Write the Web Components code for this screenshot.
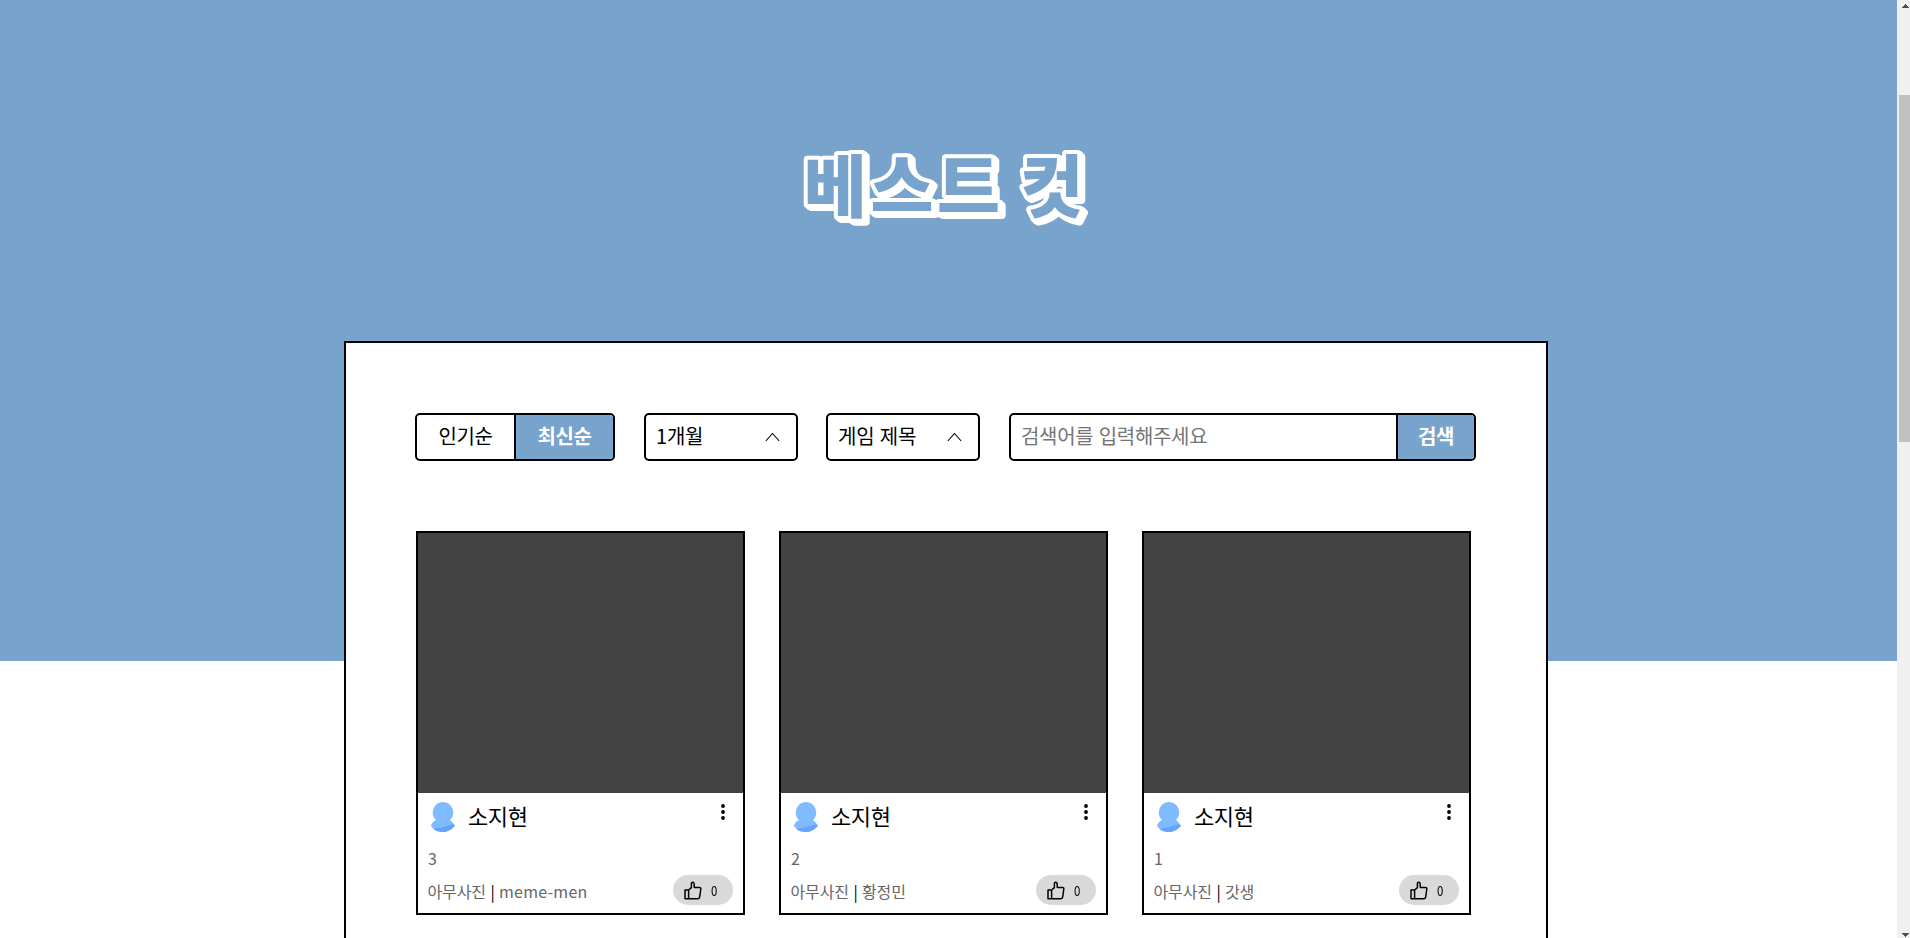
<!DOCTYPE html>
<html lang="ko">
<head>
<meta charset="utf-8">
<title>베스트 컷</title>
<style>
html,body{margin:0;height:100%;overflow:hidden;background:#fff}
body{font-family:"Noto Sans CJK KR",sans-serif;color:#000}
</style>
</head>
<body>
<best-page></best-page>
<script>
const define = (name, html, init) => customElements.define(name, class extends HTMLElement {
  constructor() {
    super();
    const t = document.createElement('template');
    t.innerHTML = html;
    this.attachShadow({mode: 'open'}).append(t.content.cloneNode(true));
  }
  connectedCallback() { if (init) init(this, this.shadowRoot); }
});

define('hero-title', `<style>
:host{display:flex;height:341px;box-sizing:border-box;padding:130px 0 0 790px}
svg{display:block;filter:drop-shadow(2px 1px 0 #fff) drop-shadow(2px 2px 0 #fff)}
text{font-size:68.5px;font-weight:900;letter-spacing:3.6px;word-spacing:-6px;fill:#77a3cd;stroke:#fff;stroke-width:8px;stroke-linejoin:round;paint-order:stroke fill}
</style><svg width="320" height="120"><text x="13.800" y="82.400"></text></svg>`,
(host, root) => { root.querySelector('text').textContent = host.getAttribute('label'); });

define('sort-toggle', `<style>
:host{display:flex;box-sizing:border-box;width:200px;height:48px;border:2px solid #000;border-radius:5px;overflow:hidden;
font-size:20px;line-height:42px;letter-spacing:-.4px}
div{flex:1;text-align:center}
.on{border-left:2px solid #000;background:#77a3cd;color:#fff;font-weight:700}
</style><div><slot name="popular"></slot></div><div class="on"><slot name="latest"></slot></div>`);

define('drop-select', `<style>
:host{display:flex;align-items:center;justify-content:space-between;box-sizing:border-box;width:154px;height:48px;
border:2px solid #000;border-radius:5px;padding:0 16px 0 10px;font-size:20px;letter-spacing:-.2px}
span{line-height:42px;height:44px}
svg{display:block}
</style><span><slot></slot></span><svg width="15" height="10" viewBox="0 0 15 10"><path d="M.8 9 7.5 1.5 14.2 9" fill="none" stroke="#000" stroke-width="1.1"/></svg>`);

define('search-box', `<style>
:host{display:flex;box-sizing:border-box;width:467px;height:48px;border:2px solid #000;border-radius:5px;overflow:hidden;
font-size:20px;line-height:42px;letter-spacing:-.3px}
.q{flex:1;padding-left:10px;color:#757575}
.b{width:76px;border-left:2px solid #000;background:#77a3cd;color:#fff;font-weight:700;text-align:center}
</style><div class="q"><slot></slot></div><div class="b"><slot name="action"></slot></div>`);

define('like-pill', `<style>
:host{display:flex;align-items:center;box-sizing:border-box;width:60px;height:30px;border-radius:15px;background:#d9d9d9;
padding:0 0 0 11px;gap:9px;font-size:13px}
span{display:block;transform:scaleX(.88);transform-origin:0 50%}
</style><svg width="18" height="19" viewBox="0 0 18 19" fill="none" stroke="#000" stroke-width="1.5" stroke-linejoin="round" stroke-linecap="round"><path d="M4.600 9 7.400 6.600V2.400C7.400 1 9.800.7 10.100 2.500L10.300 6.400H15.300Q17 6.500 16.800 8L15.700 15.800Q15.300 17.800 13.600 17.800H4.600ZM4.600 9H1V17.800H4.600"/></svg><span><slot></slot></span>`);

define('user-avatar', `<style>:host{display:block;width:26px;height:30px}svg{display:block}</style>
<svg width="26" height="30" viewBox="0 0 26 30"><path d="M13 0a10.500 10.500 0 0 1 7 18c2 1.500 4 3.500 4.800 6C21 28 17 30 13 30S4 28 .8 24C1.700 21 3.600 19 6 18A10.500 10.500 0 0 1 13 0Z" fill="#80bbff"/><path d="M3 26.700C11 26 18 24 23.500 22L24.800 24C21 28.300 17 30 13 30 9 30 5.500 29 3 26.700Z" fill="#66a3ff"/></svg>`);

define('cut-card', `<style>
:host{display:flex;flex-direction:column;box-sizing:border-box;width:329px;height:384px;border:2px solid #000;background:#fff}
.img{height:260px;background:#434343}
.user{display:flex;height:50px;padding:9px 17px 0 12px;box-sizing:border-box}
.name{margin-left:12px;font-size:22px;line-height:26px;letter-spacing:-.4px;flex:1}
.more{margin-top:1px;height:18px}
.t{padding-left:10px;height:30px;line-height:30px;font-size:16px;color:#666}
.foot{display:flex;justify-content:space-between;padding:2px 10px 0 9.5px;font-size:16px;color:#666}
.meta{line-height:32px;letter-spacing:-.1px}
.meta b{font-weight:400;color:#000}
::slotted(:lang(en)){letter-spacing:.25px}
like-pill{color:#000}
</style><div class="img"></div>
<div class="user"><user-avatar></user-avatar><div class="name"><slot name="user"></slot></div>
<svg class="more" width="6" height="18" viewBox="0 0 6 18"><circle cx="3" cy="3" r="1.900"/><circle cx="3" cy="9" r="1.900"/><circle cx="3" cy="15" r="1.900"/></svg></div>
<div class="t"><slot name="title"></slot></div>
<div class="foot"><div class="meta"><slot name="game"></slot> <b>|</b> <slot name="author"></slot></div><like-pill>0</like-pill></div>`);

define('cut-panel', `<style>
:host{display:block;box-sizing:border-box;width:1204px;height:700px;margin-left:344px;border:2px solid #000;background:#fff;padding:70px 0 0 69px}
.bar{display:flex;align-items:flex-start}
.bar ::slotted(*){flex:none}
.cards{display:flex;gap:34px;padding:70px 0 0 1px}
</style><div class="bar"><slot name="filters"></slot></div><div class="cards"><slot></slot></div>`);

define('scroll-bar', `<style>
:host{display:flex;flex-direction:column;width:13px;height:938px;background:#f0f0f0}
i{display:block;margin:78px 0 0 2px;height:347px;background:#c1c1c1}
svg{display:block}
.d{margin-top:auto}
</style><svg width="13" height="17" viewBox="0 0 13 17"><path d="M5 8V7H6V6H7V5H8V4H9V5H10V6H11V7H12V8Z" fill="#505050" shape-rendering="crispEdges"/></svg><i></i>
<svg class="d" width="13" height="10" viewBox="0 0 13 10"><path d="M5 5H12V6H11V7H10V8H9V9H8V8H7V7H6V6H5Z" fill="#505050" shape-rendering="crispEdges"/></svg>`);

define('best-page', `<style>
:host{display:grid;grid-template-columns:1897px 13px;height:938px;overflow:hidden}
main{height:938px;overflow:hidden;background:linear-gradient(#77a3cd 661px,#fff 661px)}
.m{margin-left:29px}.n{margin-left:28px}
</style><main><hero-title label="베스트 컷"></hero-title>
<cut-panel>
<sort-toggle slot="filters"><span slot="popular">인기순</span><span slot="latest">최신순</span></sort-toggle>
<drop-select slot="filters" class="m">1개월</drop-select>
<drop-select slot="filters" class="n">게임 제목</drop-select>
<search-box slot="filters" class="m">검색어를 입력해주세요<span slot="action">검색</span></search-box>
<cut-card><span slot="user">소지현</span><span slot="title">3</span><span slot="game">아무사진</span><span slot="author" lang="en">meme-men</span></cut-card>
<cut-card><span slot="user">소지현</span><span slot="title">2</span><span slot="game">아무사진</span><span slot="author">황정민</span></cut-card>
<cut-card><span slot="user">소지현</span><span slot="title">1</span><span slot="game">아무사진</span><span slot="author">갓생</span></cut-card>
</cut-panel></main><scroll-bar></scroll-bar>`);
</script>
</body>
</html>
